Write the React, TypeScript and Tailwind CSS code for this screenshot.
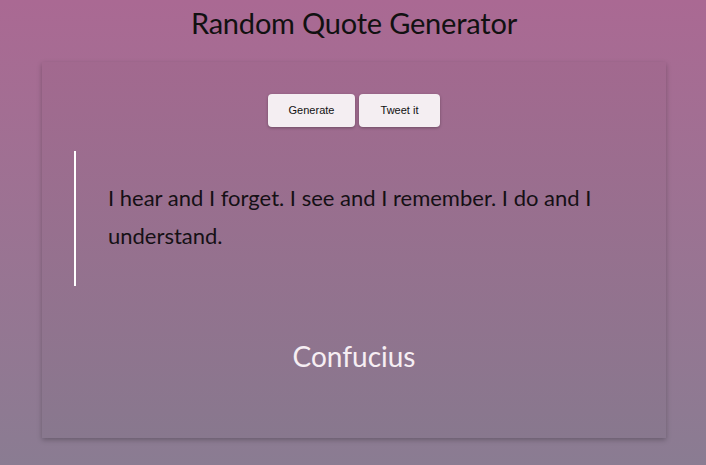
import React from "react";

export default function App() {
  return (
    <div
      className="w-[706px] h-[465px] overflow-hidden bg-gradient-to-b from-[#aa6993] to-[#8a7c92] flex flex-col items-center"
      style={{ fontFamily: "Lato, 'Open Sans', sans-serif" }}
    >
      <h1 className="mt-[4px] ml-[2px] h-[38px] text-[29px] leading-[38px] text-[#111] tracking-[-0.2px]">
        Random Quote Generator
      </h1>
      <div className="mt-[20px] ml-[2px] w-[624px] h-[376px] bg-black/[0.025] shadow-[0_2px_5px_rgba(0,0,0,0.25)] flex flex-col">
        <div className="mt-[32px] flex justify-center gap-[4px]">
          <button
            className="w-[87px] h-[33px] rounded-[4px] bg-[#f4eef2] text-[11px] text-[#111] shadow-[0_1px_3px_rgba(0,0,0,0.3)]"
            style={{ fontFamily: "'Liberation Sans', Arial, sans-serif" }}
          >
            Generate
          </button>
          <button
            className="w-[81px] h-[33px] rounded-[4px] bg-[#f4eef2] text-[11px] text-[#111] shadow-[0_1px_3px_rgba(0,0,0,0.3)]"
            style={{ fontFamily: "'Liberation Sans', Arial, sans-serif" }}
          >
            Tweet it
          </button>
        </div>
        <blockquote className="mt-[24px] ml-[32px] mr-[40px] h-[135px] border-l-2 border-white pl-[32px] pt-[28px]">
          <p className="text-[22px] leading-[38px] text-[#151015]">
            I hear and I forget. I see and I remember. I do and I understand.
          </p>
        </blockquote>
        <div className="mt-[51px] text-center text-[28px] leading-[38px] text-[#f6eef3]">
          Confucius
        </div>
      </div>
    </div>
  );
}
